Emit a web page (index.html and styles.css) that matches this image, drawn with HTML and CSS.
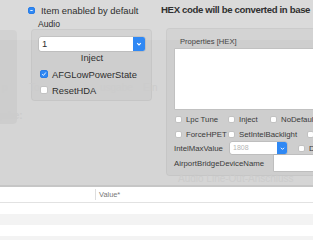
FILE: index.html
```html
<!DOCTYPE html>
<html lang="en">
<head>
<meta charset="UTF-8">
<meta name="viewport" content="width=device-width, initial-scale=1.0">
<title>Audio Properties</title>
<link rel="stylesheet" href="styles.css">
</head>
<body>

<div class="sheet">
  <div class="ghosts">
    <span class="ghost g-p">p</span>
    <span class="ghost g-to">To</span>
    <span class="ghost g-us">usgabe</span>
    <span class="ghost g-ein">Ein</span>
    <span class="ghost g-gabe">gabe:</span>
    <span class="ghost g-line">Audio Line-Out-Anschluss</span>
  </div>

  <div class="stub"></div>

  <div class="audio-col">
    <label class="check main-check"><span class="box on mixed"><svg width="7" height="7" viewBox="0 0 7 7"><path d="M1.8 3.5 H5.2" stroke="#fff" stroke-width="1.2"/></svg></span>Item enabled by default</label>
    <div class="group-title">Audio</div>
    <div class="group audio-group">
      <div class="combo">
        <span class="combo-value">1</span>
        <span class="combo-btn"><svg width="8" height="8" viewBox="0 0 8 8"><path d="M2.2 3.2 L4 5 L5.8 3.2" fill="none" stroke="#fff" stroke-width="1.1"/></svg></span>
      </div>
      <div class="inject">Inject</div>
      <label class="check big"><span class="box on"><svg width="8" height="8" viewBox="0 0 8 8"><path d="M1.6 4.2 L3.3 5.9 L6.4 2" fill="none" stroke="#fff" stroke-width="1.2"/></svg></span>AFGLowPowerState</label>
      <label class="check big"><span class="box"></span>ResetHDA</label>
    </div>
  </div>

  <div class="hex-col">
    <div class="hex-note">HEX code will be converted in base</div>
    <div class="group props-group">
      <div class="props-title">Properties [HEX]</div>
      <div class="props-area"></div>
      <div class="opt-row row-1">
        <label class="check small w53"><span class="box"></span>Lpc Tune</label>
        <label class="check small w42"><span class="box"></span>Inject</label>
        <label class="check small"><span class="box"></span>NoDefaultProperties</label>
      </div>
      <div class="opt-row row-2">
        <label class="check small w53"><span class="box"></span>ForceHPET</label>
        <label class="check small w79"><span class="box"></span>SetIntelBacklight</label>
        <label class="check small"><span class="box"></span>SetIntelMaxBacklight</label>
      </div>
      <div class="opt-row row-3">
        <span class="field-label w56">IntelMaxValue</span>
        <div class="combo mini">
          <span class="combo-value placeholder">1808</span>
          <span class="combo-btn"><svg width="7" height="7" viewBox="0 0 8 8"><path d="M2.2 3.2 L4 5 L5.8 3.2" fill="none" stroke="#fff" stroke-width="1.1"/></svg></span>
        </div>
        <label class="check small after-combo"><span class="box"></span>DisableFunction</label>
      </div>
      <div class="opt-row row-4">
        <span class="field-label w100">AirportBridgeDeviceName</span>
        <div class="text-field"></div>
      </div>
    </div>
  </div>
</div>

<div class="table">
  <div class="thead">
    <div class="th key-col"></div>
    <div class="th value-col">Value*</div>
  </div>
  <div class="tr"></div>
  <div class="tr alt"></div>
  <div class="tr"></div>
  <div class="tr alt"></div>
</div>

</body>
</html>
```

FILE: styles.css
```css
body {
  margin: 0;
  width: 313px;
  height: 240px;
  overflow: hidden;
  background-color: #fff;
  font-family: "Liberation Sans", Arial, sans-serif;
  color: #2e2e2e;
}
.sheet {
  position: relative;
  display: flex;
  align-items: flex-start;
  height: 185px;
  background: linear-gradient(#dadada 0, #dadada 40px, #d5d5d5 40px);
  border-bottom: 2px solid #c6c6c6;
  overflow: hidden;
}
.ghosts .ghost {
  position: absolute;
  color: #cccccc;
  font-size: 10px;
  white-space: nowrap;
}
.g-p { left: 2px; top: 82px; }
.g-to { left: 29px; top: 82px; }
.g-us { left: 100px; top: 82px; }
.g-ein { left: 143px; top: 82px; }
.g-gabe { left: -4px; top: 110px; font-weight: bold; }
.g-line { left: 178px; top: 173px; }
.stub {
  flex: none;
  width: 17px;
  height: 94px;
  margin-top: 30px;
  background-color: rgba(0, 0, 0, 0.035);
  border-radius: 0 4px 4px 0;
}
.check {
  display: flex;
  align-items: center;
  white-space: nowrap;
}
.box {
  flex: none;
  display: flex;
  align-items: center;
  justify-content: center;
  box-sizing: border-box;
  background-color: #fff;
  border: 1px solid #c2c2c2;
  border-radius: 2px;
}
.box.on {
  background-color: #2f88f4;
  border-color: #2a7de6;
}
.box svg { display: block; }
.audio-col {
  flex: none;
  width: 124px;
  margin-left: 11px;
  padding-top: 5px;
}
.main-check {
  height: 10px;
  font-size: 9.4px;
  gap: 6px;
}
.main-check .box {
  width: 7px;
  height: 7px;
}
.group-title {
  margin: 4px 0 0 10px;
  line-height: 10px;
  font-size: 8.6px;
}
.group {
  box-sizing: border-box;
  background-color: rgba(0, 0, 0, 0.03);
  border: 1px solid rgba(0, 0, 0, 0.04);
  border-radius: 4px;
}
.audio-group {
  width: 121px;
  height: 72px;
  margin-left: 3px;
  padding: 7px 6px 0 7px;
}
.combo {
  display: flex;
  box-sizing: border-box;
  height: 14px;
  background-color: #fff;
  border-radius: 2px;
  box-shadow: 0 0 0 0.5px rgba(0, 0, 0, 0.15);
}
.combo-value {
  flex: 1;
  padding-left: 3px;
  font-size: 9.4px;
  line-height: 14px;
}
.combo-btn {
  flex: none;
  width: 12px;
  display: flex;
  align-items: center;
  justify-content: center;
  background-color: #2f88f4;
  border-radius: 0 2px 2px 0;
}
.inject {
  margin-top: 1px;
  line-height: 12px;
  text-align: center;
  font-size: 9.4px;
}
.check.big {
  margin: 4px 0 0 1px;
  height: 12px;
  font-size: 9.4px;
  gap: 4px;
}
.check.big .box {
  width: 8px;
  height: 8px;
}
.hex-col {
  flex: none;
  width: 200px;
  margin-left: 9px;
  padding-top: 4px;
}
.hex-note {
  line-height: 11px;
  font-size: 9.6px;
  font-weight: bold;
  letter-spacing: -0.35px;
  color: #303030;
  white-space: nowrap;
}
.props-group {
  height: 148px;
  margin: 13px 0 0 5px;
  padding: 8px 0 0 8px;
}
.props-title {
  margin-left: 5px;
  line-height: 10px;
  font-size: 7.6px;
  color: #444;
}
.props-area {
  height: 60px;
  margin-top: 2px;
  background-color: #fff;
  box-shadow: 0 0 0 0.5px rgba(0, 0, 0, 0.12);
}
.opt-row {
  display: flex;
  align-items: center;
  font-size: 7.8px;
  color: #3a3a3a;
  white-space: nowrap;
}
.row-1 { height: 12px; margin-top: 4px; }
.row-2 { height: 12px; margin-top: 3px; }
.row-3 { height: 12px; margin-top: 2px; }
.row-4 { height: 16px; margin-top: 1px; }
.check.small { gap: 4px; }
.check.small .box {
  width: 7px;
  height: 7px;
}
.w53 { width: 53px; flex: none; }
.w42 { width: 42px; flex: none; }
.w79 { width: 79px; flex: none; }
.field-label { flex: none; margin-left: -1px; }
.w56 { width: 56px; }
.w100 { width: 100px; }
.combo.mini {
  flex: none;
  width: 57px;
  height: 12px;
}
.combo.mini .combo-value {
  font-size: 7px;
  line-height: 12px;
}
.combo.mini .combo-btn { width: 10px; }
.placeholder { color: #b5b5b5; }
.after-combo { margin-left: 11px; }
.text-field {
  flex: none;
  width: 60px;
  height: 16px;
  background-color: #fff;
  box-shadow: 0 0 0 0.5px rgba(0, 0, 0, 0.15);
}
.thead {
  display: flex;
  height: 15px;
  border-bottom: 1px solid #e2e2e2;
}
.th {
  font-size: 7.4px;
  line-height: 15px;
  color: #777;
}
.key-col {
  width: 96px;
  box-sizing: border-box;
  border-right: 1px solid #dedede;
  margin: 2px 0;
}
.value-col { padding-left: 3px; line-height: 15px; }
.tr { height: 11px; }
.tr.alt { background-color: #f3f3f3; }
```
